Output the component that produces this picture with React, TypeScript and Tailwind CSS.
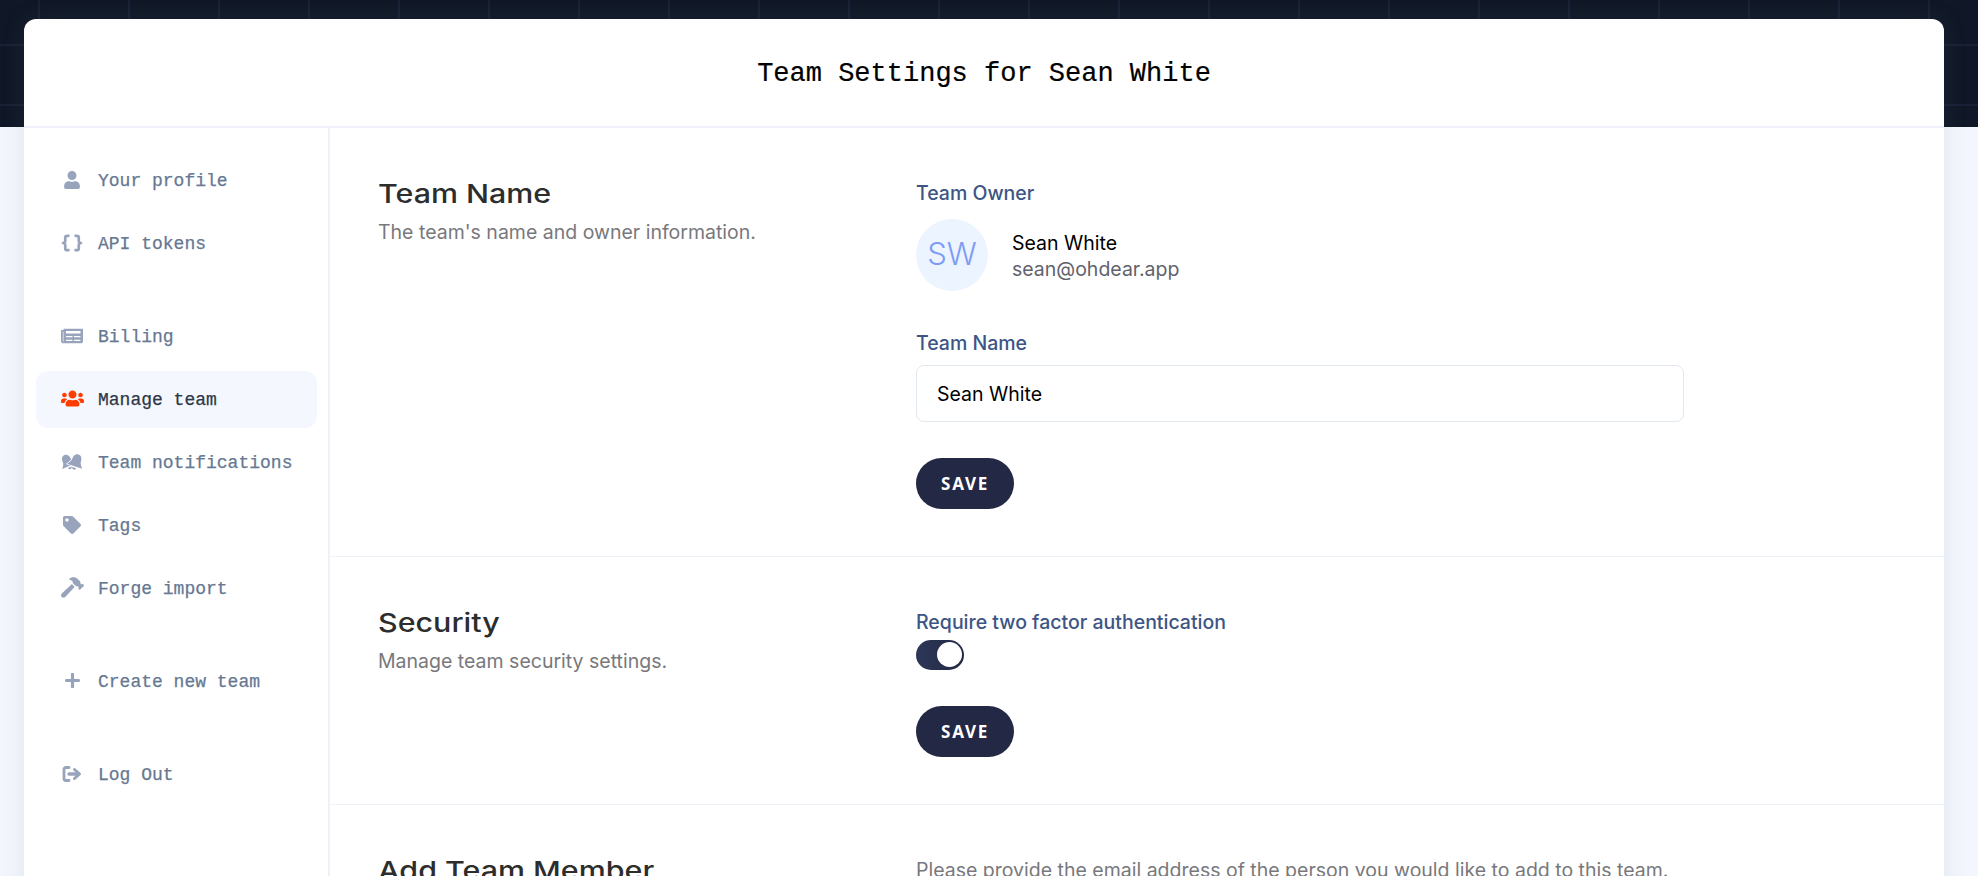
import React, { ReactNode } from 'react';
import { FaHammer, FaNewspaper, FaPlus, FaTag, FaUser, FaUsers } from 'react-icons/fa';

const MONO = "font-['Liberation_Mono',monospace]";
const SANS = "font-['Inter',sans-serif]";

function Braces() {
  return (
    <svg viewBox="0 0 24 20" className="w-[22px] h-[18px]" fill="none" stroke="currentColor" strokeWidth="3" strokeLinecap="round" strokeLinejoin="round">
      <path d="M8 2H6.500C5 2 4.500 3 4.500 4v3.500C4.500 9 3.500 10 2 10c1.500 0 2.500 1 2.500 2.500V16c0 1 .5 2 2 2H8" />
      <path d="M16 2h1.500C19 2 19.500 3 19.500 4v3.500C19.500 9 20.500 10 22 10c-1.500 0-2.500 1-2.500 2.500V16c0 1-.5 2-2 2H16" />
    </svg>
  );
}

function Bells() {
  const bell = 'M0-8c3 0 4.500 2.500 4.500 5.500 0 3.500 2 5 3.500 7H-8c1.500-2 3.500-3.500 3.500-7C-4.500-5.500-3-8 0-8z';
  return (
    <svg viewBox="0 0 24 18" className="w-[24px] h-[18px]" fill="currentColor">
      <g transform="translate(7.500 9) rotate(-24) scale(.95)">
        <path d={bell} />
        <path d="M-2 6h4a2 2 0 0 1-4 0z" />
      </g>
      <g transform="translate(16 9) rotate(18)">
        <path d={bell} stroke="#fff" strokeWidth="1.200" paintOrder="stroke" />
        <path d="M-2 6h4a2 2 0 0 1-4 0z" />
      </g>
    </svg>
  );
}

function LogOutIcon() {
  return (
    <svg viewBox="0 0 20 18" className="w-[20px] h-[18px]" fill="none" stroke="currentColor" strokeLinecap="round" strokeLinejoin="round">
      <path d="M7 2.500H4C2.500 2.500 2 3.500 2 4.500v9c0 1 .5 2 2 2h3" strokeWidth="2.800" />
      <path d="M7 9h8.500" strokeWidth="3.400" />
      <path d="M12.500 4.500 17.500 9l-5 4.500" strokeWidth="3" />
    </svg>
  );
}

function NavItem({ icon, label, active }: { icon: ReactNode; label: string; active?: boolean }) {
  return (
    <a className={`flex items-center h-[57px] pl-6 rounded-xl text-[18px] ${active ? 'bg-[#f4f7fd] text-[#2d3748]' : 'text-[#667892]'}`}>
      <span className={`w-[24px] flex justify-center mr-[14px] pb-[2px] ${active ? 'text-[#ff3d00]' : 'text-[#98a4bc]'}`}>{icon}</span>
      <span className="pt-[2px] [-webkit-text-stroke:0.25px_currentColor]">{label}</span>
    </a>
  );
}

function SaveButton() {
  return (
    <button className="block mt-9 w-[98px] h-[51px] rounded-full bg-[#232844] text-white text-[17px] font-bold tracking-[0.1em] font-['Noto_Sans',sans-serif]">
      SAVE
    </button>
  );
}

function Section({ title, description, children }: { title: string; description: string; children: ReactNode }) {
  return (
    <section className="grid grid-cols-[538px_768px] pl-12 pt-[51px] pb-[47px] border-b border-[#eef1f8]">
      <div>
        <h2 className="text-[#2d2d2d] text-[26px] leading-[30px] font-medium inline-block origin-left scale-x-[1.17]">{title}</h2>
        <p className="mt-[9px] text-[19.500px] leading-[28px] text-[#78787c]">{description}</p>
      </div>
      <div>{children}</div>
    </section>
  );
}

export default function App() {
  return (
    <div className={`h-screen overflow-hidden bg-[#f3f6fc] ${SANS}`}>
      <div className="h-[127px] bg-[#101827] bg-[linear-gradient(to_right,#1a2136_2px,transparent_2px),linear-gradient(to_bottom,#1a2136_2px,transparent_2px)] bg-size-[90px_60px] bg-position-[38px_44px]" />

      <div className="-mt-[108px] ml-6 mr-[34px] bg-white rounded-t-xl shadow-[0_0_24px_rgba(100,116,139,0.12)]">
        <header className="h-[109px] pt-[3px] flex items-center justify-center border-b-2 border-[#f0f0fa]">
          <h1 className={`text-[27px] text-black [-webkit-text-stroke:0.2px_currentColor] ${MONO}`}>Team Settings for Sean White</h1>
        </header>

        <div className="flex">
          <aside className={`w-[306px] shrink-0 border-r-2 border-[#eef1f8] pl-3 pr-[11px] pt-6 pb-10 ${MONO}`}>
            <nav className="flex flex-col gap-[6px]">
              <NavItem icon={<FaUser className="w-[16px] h-[18px]" />} label="Your profile" />
              <NavItem icon={<Braces />} label="API tokens" />
            </nav>
            <nav className="flex flex-col gap-[6px] mt-9">
              <NavItem icon={<FaNewspaper className="w-[22px] h-[20px]" />} label="Billing" />
              <NavItem active icon={<FaUsers className="w-[23px] h-[19px]" />} label="Manage team" />
              <NavItem icon={<Bells />} label="Team notifications" />
              <NavItem icon={<FaTag className="w-[18px] h-[18px]" />} label="Tags" />
              <NavItem icon={<FaHammer className="w-[23px] h-[21px]" />} label="Forge import" />
            </nav>
            <nav className="mt-9">
              <NavItem icon={<FaPlus className="w-[17px] h-[17px]" />} label="Create new team" />
            </nav>
            <nav className="mt-9">
              <NavItem icon={<LogOutIcon />} label="Log Out" />
            </nav>
          </aside>

          <main className="flex-1 min-w-0">
            <Section title="Team Name" description="The team's name and owner information.">
              <label className="block text-[19.500px] leading-[28px] font-medium text-[#3d5585]">Team Owner</label>
              <div className="flex items-center gap-6 mt-[12px]">
                <div className="w-[72px] h-[72px] pb-[2px] rounded-full bg-[#ebf4ff] text-[#7f9cf5] text-[31px] font-light flex items-center justify-center">SW</div>
                <div className="pt-[1px]">
                  <div className="text-[19.500px] leading-[26px] text-black">Sean White</div>
                  <div className="text-[19.500px] leading-[26px] text-[#5f636e]">sean@ohdear.app</div>
                </div>
              </div>

              <label className="block mt-[38px] text-[19.500px] leading-[28px] font-medium text-[#3d5585]">Team Name</label>
              <input
                readOnly
                value="Sean White"
                className="block mt-2 w-full h-[57px] px-5 rounded-lg border border-[#e2e8f0] text-[19.500px] text-black outline-none"
              />
              <SaveButton />
            </Section>

            <Section title="Security" description="Manage team security settings.">
              <label className="block text-[19.500px] leading-[28px] font-medium text-[#3d5585]">Require two factor authentication</label>
              <div className="relative mt-1 w-12 h-[30px] rounded-full bg-linear-to-r from-[#2d3758] to-[#232844]">
                <span className="absolute right-[2px] top-[2px] w-[25px] h-[25px] rounded-full bg-white" />
              </div>
              <SaveButton />
            </Section>

            <Section title="Add Team Member" description="Add a new team member to your team.">
              <p className="text-[19.500px] leading-[28px] text-[#78787c]">
                Please provide the email address of the person you would like to add to this team.
              </p>
            </Section>
          </main>
        </div>
      </div>
    </div>
  );
}
